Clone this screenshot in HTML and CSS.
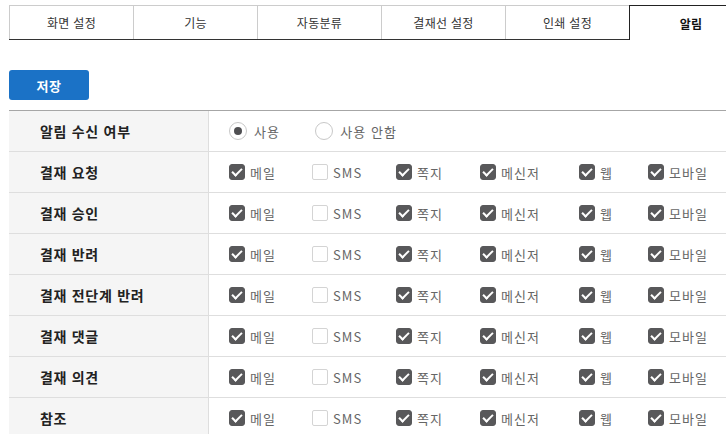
FILE: index.html
```html
<!DOCTYPE html>
<html lang="ko">
<head>
<meta charset="utf-8">
<link rel="stylesheet" href="styles.css">
</head>
<body>
<div class="page">
  <nav class="tabs">
    <div class="tab">화면 설정</div>
    <div class="tab">기능</div>
    <div class="tab">자동분류</div>
    <div class="tab">결재선 설정</div>
    <div class="tab">인쇄 설정</div>
    <div class="tab active">알림</div>
  </nav>
  <div class="actions"><button class="btn-save">저장</button></div>
  <div class="grid">
    <div class="row">
      <div class="label">알림 수신 여부</div>
      <div class="value radios">
        <span class="opt"><span class="radio on"></span>사용</span>
        <span class="opt"><span class="radio"></span>사용 안함</span>
      </div>
    </div>
    <div class="row">
      <div class="label">결재 요청</div>
      <div class="value checks">
        <span class="opt"><span class="cb on"></span>메일</span>
        <span class="opt"><span class="cb"></span>SMS</span>
        <span class="opt"><span class="cb on"></span>쪽지</span>
        <span class="opt"><span class="cb on"></span>메신저</span>
        <span class="opt"><span class="cb on"></span>웹</span>
        <span class="opt"><span class="cb on"></span>모바일</span>
      </div>
    </div>
    <div class="row">
      <div class="label">결재 승인</div>
      <div class="value checks">
        <span class="opt"><span class="cb on"></span>메일</span>
        <span class="opt"><span class="cb"></span>SMS</span>
        <span class="opt"><span class="cb on"></span>쪽지</span>
        <span class="opt"><span class="cb on"></span>메신저</span>
        <span class="opt"><span class="cb on"></span>웹</span>
        <span class="opt"><span class="cb on"></span>모바일</span>
      </div>
    </div>
    <div class="row">
      <div class="label">결재 반려</div>
      <div class="value checks">
        <span class="opt"><span class="cb on"></span>메일</span>
        <span class="opt"><span class="cb"></span>SMS</span>
        <span class="opt"><span class="cb on"></span>쪽지</span>
        <span class="opt"><span class="cb on"></span>메신저</span>
        <span class="opt"><span class="cb on"></span>웹</span>
        <span class="opt"><span class="cb on"></span>모바일</span>
      </div>
    </div>
    <div class="row">
      <div class="label">결재 전단계 반려</div>
      <div class="value checks">
        <span class="opt"><span class="cb on"></span>메일</span>
        <span class="opt"><span class="cb"></span>SMS</span>
        <span class="opt"><span class="cb on"></span>쪽지</span>
        <span class="opt"><span class="cb on"></span>메신저</span>
        <span class="opt"><span class="cb on"></span>웹</span>
        <span class="opt"><span class="cb on"></span>모바일</span>
      </div>
    </div>
    <div class="row">
      <div class="label">결재 댓글</div>
      <div class="value checks">
        <span class="opt"><span class="cb on"></span>메일</span>
        <span class="opt"><span class="cb"></span>SMS</span>
        <span class="opt"><span class="cb on"></span>쪽지</span>
        <span class="opt"><span class="cb on"></span>메신저</span>
        <span class="opt"><span class="cb on"></span>웹</span>
        <span class="opt"><span class="cb on"></span>모바일</span>
      </div>
    </div>
    <div class="row">
      <div class="label">결재 의견</div>
      <div class="value checks">
        <span class="opt"><span class="cb on"></span>메일</span>
        <span class="opt"><span class="cb"></span>SMS</span>
        <span class="opt"><span class="cb on"></span>쪽지</span>
        <span class="opt"><span class="cb on"></span>메신저</span>
        <span class="opt"><span class="cb on"></span>웹</span>
        <span class="opt"><span class="cb on"></span>모바일</span>
      </div>
    </div>
    <div class="row">
      <div class="label">참조</div>
      <div class="value checks">
        <span class="opt"><span class="cb on"></span>메일</span>
        <span class="opt"><span class="cb"></span>SMS</span>
        <span class="opt"><span class="cb on"></span>쪽지</span>
        <span class="opt"><span class="cb on"></span>메신저</span>
        <span class="opt"><span class="cb on"></span>웹</span>
        <span class="opt"><span class="cb on"></span>모바일</span>
      </div>
    </div>
  </div>
</div>
</body>
</html>
```

FILE: styles.css
```css
html, body {
  margin: 0;
  padding: 0;
  overflow: hidden;
  background: #fff;
}
body {
  font-family: "Noto Sans CJK KR", "Noto Sans", sans-serif;
  color: #333;
}
.page {
  padding: 5px 0 0 9px;
  width: 744px;
}
.tabs {
  display: flex;
  border-bottom: 1px solid #333;
  height: 34px;
}
.tab {
  width: 124px;
  box-sizing: border-box;
  border-top: 1px solid #ccc;
  border-left: 1px solid #ccc;
  display: flex;
  align-items: center;
  justify-content: center;
  font-size: 12px;
  letter-spacing: 0.3px;
  color: #333;
  height: 34px;
}
.tab.active {
  border-top: 1px solid #222;
  border-left: 1px solid #222;
  border-right: 1px solid #222;
  height: 35px;
  background: #fff;
  font-weight: bold;
  color: #111;
  padding-top: 1px;
}
.actions {
  padding-top: 30px;
}
.btn-save {
  width: 80px;
  height: 30px;
  border: 0;
  border-radius: 3px;
  background: #1b72c6;
  color: #fff;
  font-family: inherit;
  font-size: 13px;
  font-weight: bold;
  letter-spacing: 0.5px;
  padding: 0;
  display: block;
}
.grid {
  margin-top: 10px;
  border-top: 1px solid #a6a6a6;
}
.row {
  display: flex;
  height: 40px;
  border-bottom: 1px solid #dedede;
}
.label {
  width: 200px;
  box-sizing: border-box;
  background: #f5f5f5;
  border-right: 1px solid #dedede;
  padding-left: 31px;
  display: flex;
  align-items: center;
  font-size: 14px;
  letter-spacing: 0.7px;
  font-weight: bold;
  color: #222;
}
.value {
  flex: 1;
  padding-left: 20px;
  display: flex;
  align-items: center;
  font-size: 13px;
  letter-spacing: 1.1px;
  color: #666;
}
.checks {
  display: grid;
  grid-template-columns: 83px 84px 84px 99px 69px auto;
  align-items: center;
}
.radios .opt {
  margin-right: 35px;
}
.opt {
  display: inline-flex;
  align-items: center;
}
.cb {
  position: relative;
  width: 16px;
  height: 16px;
  box-sizing: border-box;
  border: 1px solid #d4d4d4;
  border-radius: 2px;
  background: #fff;
  margin-right: 5px;
  flex: none;
}
.cb.on {
  background: #58585a;
  border-color: #58585a;
  border-radius: 3px;
}
.cb.on::after {
  content: "";
  position: absolute;
  left: 4px;
  top: 1px;
  width: 4px;
  height: 8px;
  border: solid #fff;
  border-width: 0 2px 2px 0;
  transform: rotate(45deg);
}
.radio {
  position: relative;
  width: 18px;
  height: 18px;
  box-sizing: border-box;
  border: 1px solid #c8c8c8;
  border-radius: 50%;
  background: #fff;
  margin-right: 7px;
  flex: none;
}
.radio.on::after {
  content: "";
  position: absolute;
  left: 4px;
  top: 4px;
  width: 8px;
  height: 8px;
  border-radius: 50%;
  background: #4f4f52;
}
```
